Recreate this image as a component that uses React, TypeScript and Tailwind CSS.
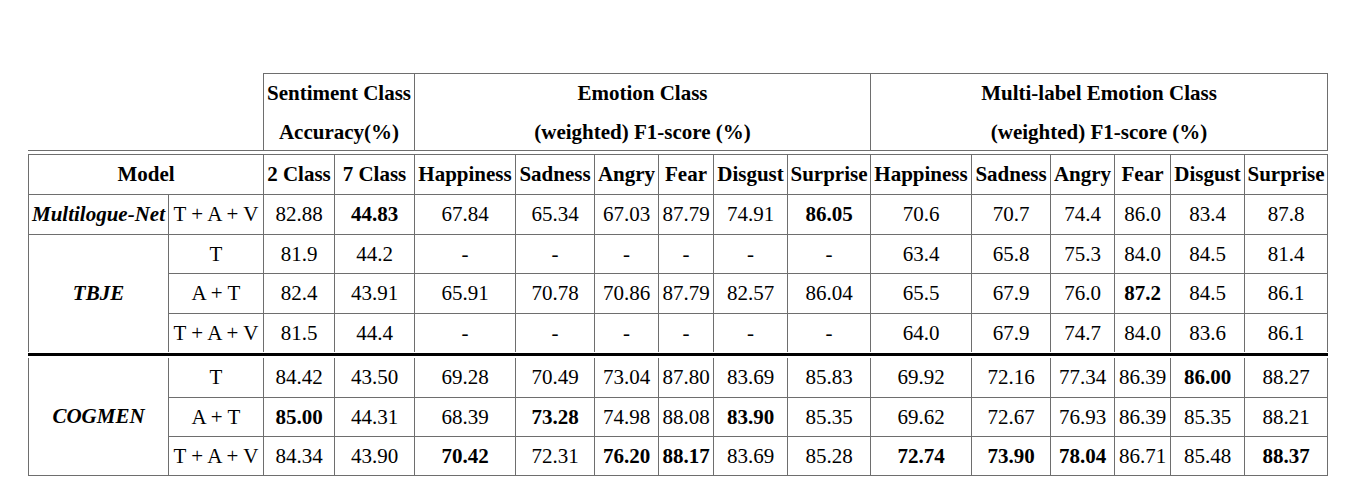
import React from "react";

const cols =
  "grid-cols-[139px_94px_70px_79px_100px_78px_63px_54px_73px_82px_100px_78px_63px_55px_73px_82px]";

type Cell = { t: string; b?: boolean };

const tbje: { mod: string; vals: Cell[] }[] = [
  {
    mod: "T",
    vals: [
      { t: "81.9" }, { t: "44.2" },
      { t: "-" }, { t: "-" }, { t: "-" }, { t: "-" }, { t: "-" }, { t: "-" },
      { t: "63.4" }, { t: "65.8" }, { t: "75.3" }, { t: "84.0" }, { t: "84.5" }, { t: "81.4" },
    ],
  },
  {
    mod: "A + T",
    vals: [
      { t: "82.4" }, { t: "43.91" },
      { t: "65.91" }, { t: "70.78" }, { t: "70.86" }, { t: "87.79" }, { t: "82.57" }, { t: "86.04" },
      { t: "65.5" }, { t: "67.9" }, { t: "76.0" }, { t: "87.2", b: true }, { t: "84.5" }, { t: "86.1" },
    ],
  },
  {
    mod: "T + A + V",
    vals: [
      { t: "81.5" }, { t: "44.4" },
      { t: "-" }, { t: "-" }, { t: "-" }, { t: "-" }, { t: "-" }, { t: "-" },
      { t: "64.0" }, { t: "67.9" }, { t: "74.7" }, { t: "84.0" }, { t: "83.6" }, { t: "86.1" },
    ],
  },
];

const cogmen: { mod: string; vals: Cell[] }[] = [
  {
    mod: "T",
    vals: [
      { t: "84.42" }, { t: "43.50" },
      { t: "69.28" }, { t: "70.49" }, { t: "73.04" }, { t: "87.80" }, { t: "83.69" }, { t: "85.83" },
      { t: "69.92" }, { t: "72.16" }, { t: "77.34" }, { t: "86.39" }, { t: "86.00", b: true }, { t: "88.27" },
    ],
  },
  {
    mod: "A + T",
    vals: [
      { t: "85.00", b: true }, { t: "44.31" },
      { t: "68.39" }, { t: "73.28", b: true }, { t: "74.98" }, { t: "88.08" }, { t: "83.90", b: true }, { t: "85.35" },
      { t: "69.62" }, { t: "72.67" }, { t: "76.93" }, { t: "86.39" }, { t: "85.35" }, { t: "88.21" },
    ],
  },
  {
    mod: "T + A + V",
    vals: [
      { t: "84.34" }, { t: "43.90" },
      { t: "70.42", b: true }, { t: "72.31" }, { t: "76.20", b: true }, { t: "88.17", b: true }, { t: "83.69" }, { t: "85.28" },
      { t: "72.74", b: true }, { t: "73.90", b: true }, { t: "78.04", b: true }, { t: "86.71" }, { t: "85.48" }, { t: "88.37", b: true },
    ],
  },
];

const multilogue: Cell[] = [
  { t: "82.88" }, { t: "44.83", b: true },
  { t: "67.84" }, { t: "65.34" }, { t: "67.03" }, { t: "87.79" }, { t: "74.91" }, { t: "86.05", b: true },
  { t: "70.6" }, { t: "70.7" }, { t: "74.4" }, { t: "86.0" }, { t: "83.4" }, { t: "87.8" },
];

const emotions = ["Happiness", "Sadness", "Angry", "Fear", "Disgust", "Surprise"];

function C({
  children,
  bold,
  italic,
  className = "",
}: {
  children: React.ReactNode;
  bold?: boolean;
  italic?: boolean;
  className?: string;
}) {
  return (
    <div
      className={`bg-white flex items-center justify-center whitespace-nowrap ${
        bold ? "font-bold" : ""
      } ${italic ? "italic" : ""} ${className}`}
    >
      {children}
    </div>
  );
}

function Rows({ rows, name }: { rows: { mod: string; vals: Cell[] }[]; name: string }) {
  return (
    <>
      <C bold italic className="row-span-3">
        {name}
      </C>
      {rows.map((r, i) => (
        <React.Fragment key={i}>
          <C>{r.mod}</C>
          {r.vals.map((v, j) => (
            <C key={j} bold={v.b}>
              {v.t}
            </C>
          ))}
        </React.Fragment>
      ))}
    </>
  );
}

export default function App() {
  return (
    <div
      className="w-[1365px] h-[500px] bg-white text-black text-[21px] leading-none overflow-hidden"
      style={{ fontFamily: '"Liberation Serif", "Times New Roman", serif' }}
    >
      <div className="pt-[73px] pl-[28px] w-[1329px]">
        {/* Header group */}
        <div className="flex">
          <div className="w-[235px]" />
          <div className="grid grid-cols-[150px_455px_456px] gap-px bg-[#6e6e6e] pt-px px-px">
            <C bold className="h-[76px] flex-col leading-[39px] pt-px">
              <span>Sentiment Class</span>
              <span>Accuracy(%)</span>
            </C>
            <C bold className="h-[76px] flex-col leading-[39px] pt-px">
              <span>Emotion Class</span>
              <span>(weighted) F1-score (%)</span>
            </C>
            <C bold className="h-[76px] flex-col leading-[39px] pt-px">
              <span>Multi-label Emotion Class</span>
              <span>(weighted) F1-score (%)</span>
            </C>
          </div>
        </div>
        <div className="h-px w-[1300px] bg-[#6e6e6e]" />
        <div className="h-[3px]" />

        {/* Main upper grid */}
        <div
          className={`grid ${cols} grid-rows-[39px_39px_38px_39px_38px] gap-px bg-[#6e6e6e] pt-px px-px w-[1300px]`}
        >
          <C bold className="col-span-2">
            Model
          </C>
          <C bold>2 Class</C>
          <C bold>7 Class</C>
          {emotions.map((e) => (
            <C key={"a" + e} bold>
              {e}
            </C>
          ))}
          {emotions.map((e) => (
            <C key={"b" + e} bold>
              {e}
            </C>
          ))}

          <C bold italic>
            Multilogue-Net
          </C>
          <C>T + A + V</C>
          {multilogue.map((v, j) => (
            <C key={j} bold={v.b}>
              {v.t}
            </C>
          ))}

          <Rows rows={tbje} name="TBJE" />
        </div>

        {/* thick separator */}
        <div className="h-[1px]" />
        <div className="h-[3px] w-[1300px] bg-black" />
        <div className="h-[2px]" />

        {/* COGMEN grid */}
        <div
          className={`grid ${cols} grid-rows-[39px_38px_38px] gap-px bg-[#6e6e6e] px-px pb-px w-[1300px]`}
        >
          <Rows rows={cogmen} name="COGMEN" />
        </div>
      </div>
    </div>
  );
}
